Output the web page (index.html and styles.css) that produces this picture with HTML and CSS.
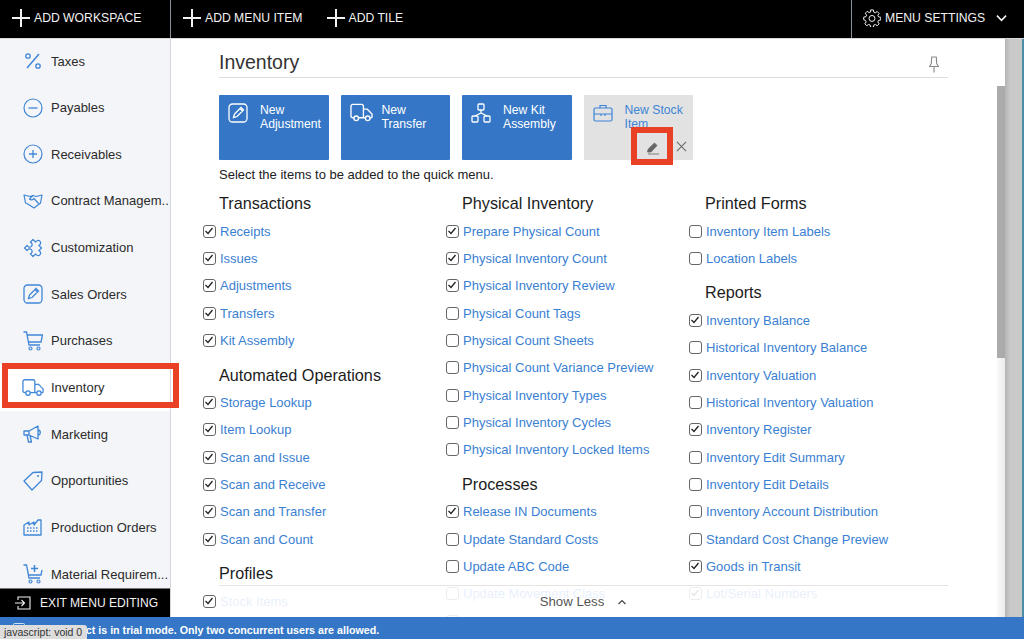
FILE: index.html
```html
<!DOCTYPE html>
<html lang="en">
<head>
<meta charset="utf-8">
<title>Inventory</title>
<link rel="stylesheet" href="styles.css">
</head>
<body>
<svg class="defs" width="0" height="0" aria-hidden="true">
  <symbol id="plus" viewBox="0 0 18 18"><path d="M9 0v18M0 9h18" fill="none" stroke="currentColor" stroke-width="2"/></symbol>
  <symbol id="truck" viewBox="0 0 24 20"><path d="M4 15H3a2 2 0 0 1-2-2V3a2 2 0 0 1 2-2h9a2 2 0 0 1 2 2v12H9M14 6h4l5 5v3a1 1 0 0 1-1 1h-1M16 15h-2" fill="none" stroke="currentColor" stroke-width="1.4"/><circle cx="6.5" cy="15.5" r="2.4" fill="none" stroke="currentColor" stroke-width="1.4"/><circle cx="18.5" cy="15.5" r="2.4" fill="none" stroke="currentColor" stroke-width="1.4"/></symbol>
  <symbol id="edit" viewBox="0 0 20 20"><rect x="1" y="1" width="18" height="18" rx="3.5" fill="none" stroke="currentColor" stroke-width="1.3"/><path d="M5.5 14.5l1-3.5 6.5-6.5 2.5 2.5-6.5 6.5zM12 5.500l2.500 2.500" fill="none" stroke="currentColor" stroke-width="1.3"/></symbol>
</svg>

<header class="topbar">
  <div class="top-cell top-left"><svg class="plus"><use href="#plus"/></svg>ADD WORKSPACE</div>
  <div class="top-main">
    <div class="top-item"><svg class="plus"><use href="#plus"/></svg>ADD MENU ITEM</div>
    <div class="top-item"><svg class="plus"><use href="#plus"/></svg>ADD TILE</div>
  </div>
  <div class="top-settings">
    <svg class="gear" viewBox="0 0 20 20"><path d="M8.500 1h3l.5 2.500 1.700.7 2.100-1.400 2.100 2.100-1.400 2.100.7 1.700 2.500.5v3l-2.500.5-.7 1.700 1.400 2.100-2.100 2.100-2.100-1.400-1.700.7-.5 2.500h-3l-.5-2.500-1.700-.7-2.100 1.400-2.100-2.100 1.400-2.100-.7-1.700L.800 12v-3l2.500-.5.7-1.700-1.400-2.100 2.100-2.100 2.100 1.400 1.700-.7z" fill="none" stroke="currentColor" stroke-width="1.100" stroke-linejoin="round"/><circle cx="10" cy="10.500" r="3.300" fill="none" stroke="currentColor" stroke-width="1.100"/></svg>
    MENU SETTINGS
    <svg class="chev" viewBox="0 0 12 8"><path d="M1 1.500l5 5 5-5" fill="none" stroke="currentColor" stroke-width="1.800"/></svg>
  </div>
</header>

<div class="body-row">
  <nav class="sidebar">
    <div class="nav-list">
      <a class="nav-item"><span class="nav-icon"><svg viewBox="0 0 20 20"><path d="M16 3L4 17" fill="none" stroke="currentColor" stroke-width="1.500"/><circle cx="5" cy="5" r="2.200" fill="none" stroke="currentColor" stroke-width="1.300"/><circle cx="15" cy="15" r="2.200" fill="none" stroke="currentColor" stroke-width="1.300"/></svg></span><span class="nav-text">Taxes</span></a>
      <a class="nav-item"><span class="nav-icon"><svg viewBox="0 0 20 20"><circle cx="10" cy="10" r="9" fill="none" stroke="currentColor" stroke-width="1.200"/><path d="M5.500 10h9" stroke="currentColor" stroke-width="1.300"/></svg></span><span class="nav-text">Payables</span></a>
      <a class="nav-item"><span class="nav-icon"><svg viewBox="0 0 20 20"><circle cx="10" cy="10" r="9" fill="none" stroke="currentColor" stroke-width="1.200"/><path d="M6 10h8M10 6v8" stroke="currentColor" stroke-width="1.300"/></svg></span><span class="nav-text">Receivables</span></a>
      <a class="nav-item"><span class="nav-icon"><svg viewBox="0 0 20 16"><path d="M1 2l6 1.500 3-1 3 1 6-1.500-1.500 8-6.500 5L4 10.500 2.500 10zM10 2.500L6.500 6c1.500 1.500 3 1 4.500-.5l4.500 5" fill="none" stroke="currentColor" stroke-width="1.200" stroke-linejoin="round"/></svg></span><span class="nav-text">Contract Managem..</span></a>
      <a class="nav-item"><span class="nav-icon"><svg viewBox="2.500 3.500 15 15"><path d="M5.500 6.500h2.800a1.900 1.900 0 1 1 3.400 0h2.800v2.800a1.900 1.900 0 1 1 0 3.400v2.800h-2.800a1.900 1.900 0 1 0-3.400 0H5.500v-2.800a1.900 1.900 0 1 0 0-3.400z" transform="rotate(45 10 11)" fill="none" stroke="currentColor" stroke-width=".95" stroke-linejoin="round"/></svg></span><span class="nav-text">Customization</span></a>
      <a class="nav-item"><span class="nav-icon"><svg><use href="#edit"/></svg></span><span class="nav-text">Sales Orders</span></a>
      <a class="nav-item"><span class="nav-icon"><svg viewBox="0 0 20 20"><path d="M0.500 1h3l2.500 13h11M4.500 4h15l-1.500 7H6" fill="none" stroke="currentColor" stroke-width="1.300"/><circle cx="7.500" cy="17.500" r="1.500" fill="none" stroke="currentColor" stroke-width="1.200"/><circle cx="15.500" cy="17.500" r="1.500" fill="none" stroke="currentColor" stroke-width="1.200"/></svg></span><span class="nav-text">Purchases</span></a>
      <a class="nav-item nav-active"><span class="nav-icon nav-icon-wide"><svg><use href="#truck"/></svg></span><span class="nav-text">Inventory</span></a>
      <a class="nav-item"><span class="nav-icon"><svg viewBox="0 0 20 20"><path d="M1 7h5l9-5v13l-9-4H1zM6 7v4M4 11l1.500 7h3L7 11.500M15 6c3 0 3 5 0 5" fill="none" stroke="currentColor" stroke-width="1.300" stroke-linejoin="round"/></svg></span><span class="nav-text">Marketing</span></a>
      <a class="nav-item"><span class="nav-icon"><svg viewBox="0 0 20 20"><path d="M1 10L10 1.500l9-.5-.5 8.500L9 19z" fill="none" stroke="currentColor" stroke-width="1.300" stroke-linejoin="round"/><circle cx="15" cy="5" r="1" fill="currentColor"/></svg></span><span class="nav-text">Opportunities</span></a>
      <a class="nav-item"><span class="nav-icon"><svg viewBox="0 0 20 18"><path d="M1 17V7l5-3v3l5-3v3l4-5h3v15z" fill="none" stroke="currentColor" stroke-width="1.300" stroke-linejoin="round"/><path d="M4 10h12M4 13h12" stroke="currentColor" stroke-width="1.500" stroke-dasharray="1.500 1.500"/></svg></span><span class="nav-text">Production Orders</span></a>
      <a class="nav-item"><span class="nav-icon"><svg viewBox="0 0 20 20"><path d="M0.500 1h3l2.500 13h11M4.500 6l1 5H18l1-5" fill="none" stroke="currentColor" stroke-width="1.300"/><path d="M11.500 1v7M8 4.500h7" stroke="currentColor" stroke-width="1.500"/><circle cx="7.500" cy="17.500" r="1.500" fill="none" stroke="currentColor" stroke-width="1.200"/><circle cx="15.500" cy="17.500" r="1.500" fill="none" stroke="currentColor" stroke-width="1.200"/></svg></span><span class="nav-text">Material Requirem...</span></a>
    </div>
    <div class="exit">
      <svg class="exit-icon" viewBox="0 0 16 14"><path d="M3 4V1h12v12H3v-3M0 7h9M6.500 4L9.500 7l-3 3" fill="none" stroke="currentColor" stroke-width="1.100"/></svg>
      EXIT MENU EDITING
    </div>
  </nav>

  <main class="content">
    <div class="panel">
      <div class="title-row">
        <h1>Inventory</h1>
        <svg class="pin" viewBox="0 0 10 17"><path d="M2.700 1h4.600l.4 6.500L9.500 10.500H.5l1.800-3zM5 10.500V16.500" fill="none" stroke="#888" stroke-width="1.100" stroke-linejoin="round"/></svg>
      </div>

      <div class="tiles">
        <div class="tile"><svg class="tile-icon"><use href="#edit"/></svg><span class="tile-label">New Adjustment</span></div>
        <div class="tile"><svg class="tile-icon tile-truck"><use href="#truck"/></svg><span class="tile-label">New Transfer</span></div>
        <div class="tile"><svg class="tile-icon" viewBox="0 0 20 20"><g fill="none" stroke="currentColor" stroke-width="1.300"><rect x="7" y="1" width="6" height="6" rx="1"/><rect x="1" y="13" width="6" height="6" rx="1"/><rect x="13" y="13" width="6" height="6" rx="1"/><path d="M10 7v3M4 13l6-3 6 3"/></g></svg><span class="tile-label">New Kit Assembly</span></div>
        <div class="tile tile-edit">
          <svg class="tile-icon" viewBox="0 0 20 18"><g fill="none" stroke="currentColor" stroke-width="1.200"><rect x="1" y="4" width="18" height="13" rx="1.500"/><path d="M7 4V1.500h6V4M1 10h18M8 10v2M12 10v2"/></g></svg>
          <span class="tile-label">New Stock Item</span>
          <span class="tile-pen"><svg viewBox="0 0 14 14"><path d="M1.500 11l.8-3L8.500 2l2.500 2.500L5 11zM2 13h11" fill="#666" stroke="#666" stroke-width=".8"/></svg></span>
          <svg class="tile-x" viewBox="0 0 12 12"><path d="M1 1l10 10M11 1L1 11" fill="none" stroke="#666" stroke-width="1.100"/></svg>
        </div>
      </div>

      <p class="hint">Select the items to be added to the quick menu.</p>

      <div class="columns">
        <div class="col">
          <h2>Transactions</h2>
          <ul>
            <li class="on"><i></i><a>Receipts</a></li>
            <li class="on"><i></i><a>Issues</a></li>
            <li class="on"><i></i><a>Adjustments</a></li>
            <li class="on"><i></i><a>Transfers</a></li>
            <li class="on"><i></i><a>Kit Assembly</a></li>
          </ul>
          <h2>Automated Operations</h2>
          <ul>
            <li class="on"><i></i><a>Storage Lookup</a></li>
            <li class="on"><i></i><a>Item Lookup</a></li>
            <li class="on"><i></i><a>Scan and Issue</a></li>
            <li class="on"><i></i><a>Scan and Receive</a></li>
            <li class="on"><i></i><a>Scan and Transfer</a></li>
            <li class="on"><i></i><a>Scan and Count</a></li>
          </ul>
          <h2>Profiles</h2>
          <ul>
            <li class="on"><i></i><a>Stock Items</a></li>
          </ul>
        </div>
        <div class="col">
          <h2>Physical Inventory</h2>
          <ul>
            <li class="on"><i></i><a>Prepare Physical Count</a></li>
            <li class="on"><i></i><a>Physical Inventory Count</a></li>
            <li class="on"><i></i><a>Physical Inventory Review</a></li>
            <li><i></i><a>Physical Count Tags</a></li>
            <li><i></i><a>Physical Count Sheets</a></li>
            <li><i></i><a>Physical Count Variance Preview</a></li>
            <li><i></i><a>Physical Inventory Types</a></li>
            <li><i></i><a>Physical Inventory Cycles</a></li>
            <li><i></i><a>Physical Inventory Locked Items</a></li>
          </ul>
          <h2>Processes</h2>
          <ul>
            <li class="on"><i></i><a>Release IN Documents</a></li>
            <li><i></i><a>Update Standard Costs</a></li>
            <li><i></i><a>Update ABC Code</a></li>
            <li><i></i><a>Update Movement Class</a></li>
            <li><i></i><a>Update Price</a></li>
          </ul>
        </div>
        <div class="col">
          <h2>Printed Forms</h2>
          <ul>
            <li><i></i><a>Inventory Item Labels</a></li>
            <li><i></i><a>Location Labels</a></li>
          </ul>
          <h2>Reports</h2>
          <ul>
            <li class="on"><i></i><a>Inventory Balance</a></li>
            <li><i></i><a>Historical Inventory Balance</a></li>
            <li class="on"><i></i><a>Inventory Valuation</a></li>
            <li><i></i><a>Historical Inventory Valuation</a></li>
            <li class="on"><i></i><a>Inventory Register</a></li>
            <li><i></i><a>Inventory Edit Summary</a></li>
            <li><i></i><a>Inventory Edit Details</a></li>
            <li><i></i><a>Inventory Account Distribution</a></li>
            <li><i></i><a>Standard Cost Change Preview</a></li>
            <li class="on"><i></i><a>Goods in Transit</a></li>
            <li class="on"><i></i><a>Lot/Serial Numbers</a></li>
          </ul>
        </div>
      </div>

      <div class="show-less">Show Less <svg viewBox="0 0 10 6"><path d="M1.500 5L5 1.500 8.500 5" fill="none" stroke="#444" stroke-width="1.200"/></svg></div>
    </div>
    <div class="scroll-inner"><div class="scroll-thumb"></div></div>
    <div class="scroll-outer"></div>
  </main>
</div>

<footer class="trial">
  <svg class="trial-icon" viewBox="0 0 12 16"><rect x=".5" y=".5" width="11" height="15" rx="1" fill="none" stroke="#cfe0f4" stroke-width="1"/></svg>
  <span>Your product is in trial mode. Only two concurrent users are allowed.</span>
</footer>
<div class="red-box red-nav"></div>
<div class="red-box red-pen"></div>
<div class="status">javascript: void 0</div>
</body>
</html>
```

FILE: styles.css
```css
* { box-sizing: border-box; }
html, body { margin: 0; height: 100%; }
body {
  width: 1024px; height: 639px; overflow: hidden; position: relative;
  display: flex; flex-direction: column;
  font-family: "Liberation Sans", Arial, sans-serif; color: #222; background: #fff;
}
.defs { position: absolute; }

.topbar { height: 39px; flex: none; display: flex; background: #000; color: #f2f2f2; font-size: 12.2px; border-bottom: 1px solid #d9d9d9; }
.top-cell, .top-item, .top-settings { display: flex; align-items: center; padding-bottom: 2px; }
.top-left { width: 171px; padding-left: 12px; gap: 4px; border-right: 1px solid #8a939c; }
.top-main { flex: 1; display: flex; padding-left: 12px; gap: 24px; }
.top-item { gap: 4px; }
.plus { width: 18px; height: 18px; flex: none; }
.top-settings { width: 173px; padding-left: 11px; border-left: 1px solid #8a939c; }
.gear { width: 18px; height: 18px; margin-right: 4px; }
.chev { width: 11px; height: 8px; margin-left: 11px; }

.body-row { flex: 1; min-height: 0; display: flex; }
.sidebar { width: 171px; flex: none; display: flex; flex-direction: column; background: #f4f5f8; border-right: 1px solid #d4d6da; }
.nav-list { flex: 1; min-height: 0; margin-top: -1.3px; overflow: hidden; display: flex; flex-direction: column; }
.nav-item { height: 46.65px; flex: none; display: flex; align-items: center; padding-left: 23px; font-size: 13px; color: #2b2b2b; }
.nav-text { flex: 1; min-width: 0; white-space: nowrap; overflow: hidden; }
.nav-icon { width: 20px; height: 20px; margin-right: 8px; flex: none; color: #3f86d6; display: block; }
.nav-icon svg { width: 100%; height: 100%; display: block; }
.nav-icon-wide { width: 22px; margin-left: -1px; margin-right: 7px; }
.nav-active { background: #fff; }
.exit { height: 29px; flex: none; width: 170px; background: #000; color: #f2f2f2; display: flex; align-items: center; padding-left: 15px; gap: 9px; font-size: 12.1px; border-top: 1px solid #777; }
.exit-icon { width: 16px; height: 14px; flex: none; }

.content { flex: 1; min-width: 0; display: flex; position: relative; overflow: hidden; }
.panel { flex: 1; min-width: 0; padding: 0 0 0 32px; position: relative; overflow: hidden; }
.title-row { width: 729px; margin-left: 16px; height: 39px; display: flex; align-items: center; justify-content: space-between; padding-top: 8px; padding-right: 9px; border-bottom: 1px solid #dcdcdc; }
h1 { margin: 0; font-size: 19.5px; font-weight: 400; color: #333; }
.pin { width: 10px; height: 17px; align-self: flex-end; margin-bottom: 4px; }

.tiles { display: flex; gap: 12px; margin: 17px 0 0 16px; }
.tile { position: relative; width: 109.5px; height: 65px; background: #3577c6; color: #fff; font-size: 12.2px; line-height: 14px; border-radius: 1px; display: flex; padding: 8px 8px 0 9px; gap: 12px; }
.tile-icon { width: 20px; height: 20px; flex: none; }
.tile-truck { width: 23px; margin-right: -3px; }
.tile-label { line-height: 14px; }
.tile-edit { background: #e2e2e2; color: #3d84d6; }
.tile-pen { position: absolute; left: 51px; top: 40px; width: 36px; height: 25px; display: flex; align-items: center; justify-content: center; background: #e2e2e2; }
.tile-pen svg { width: 14px; height: 14px; }
.tile-x { position: absolute; left: 92px; top: 46px; width: 11px; height: 11px; }

.hint { margin: 7px 0 0 16px; font-size: 13px; line-height: 16px; color: #222; }

.columns { display: grid; grid-template-columns: 243px 243px 243px; margin-top: 10px; }
h2 { margin: 0 0 0 16px; font-size: 16.2px; line-height: 20px; font-weight: 400; color: #1c1c1c; }
.col > h2:first-child { margin-bottom: .5px; }
ul { list-style: none; margin: 4.4px 0 10.4px; padding: 0; }
li { height: 27.35px; display: flex; align-items: center; gap: 4px; font-size: 13px; color: #3a80d2; }
li i { width: 13px; height: 13px; border: 1.5px solid #666; border-radius: 3px; flex: none; background: #fff; }
li.on i { background: #fff url("data:image/svg+xml,%3Csvg xmlns='http://www.w3.org/2000/svg' viewBox='0 0 13 13'%3E%3Cpath d='M2.500 6l2.500 2.500 4.500-5.500' fill='none' stroke='%23222' stroke-width='1.300'/%3E%3C/svg%3E") center/13px no-repeat; }

.show-less { position: absolute; left: 48px; bottom: 0; width: 729px; height: 32px; background: rgba(255,255,255,.88); border-top: 1px solid #e4e4e4; font-size: 13.2px; color: #555; display: flex; align-items: center; justify-content: center; gap: 13px; }
.show-less svg { width: 10px; height: 6px; }

.scroll-inner { width: 8px; position: absolute; right: 19px; top: 0; bottom: 0; background: linear-gradient(180deg, #fff 319px, transparent 319px), linear-gradient(90deg, #fafafa, #ebebeb); }
.scroll-thumb { margin-top: 47px; height: 272px; background: #ababab; }
.scroll-outer { width: 19px; flex: none; background: linear-gradient(90deg, #b4b4b4 0, #c9c9c9 5px, #c9c9c9 17px, #4c8ca6 17px); }

.trial { height: 22px; flex: none; background: #3577c6; color: #fff; font-size: 10.7px; font-weight: 700; line-height: 14px; padding: 6px 0 0 13px; white-space: nowrap; display: flex; gap: 4px; overflow: hidden; }
.trial-icon { width: 12px; height: 16px; flex: none; }

.red-box { position: absolute; border: 6px solid #ea4126; }
.red-nav { left: 2px; top: 363px; width: 177px; height: 45px; }
.red-pen { left: 631px; top: 127px; width: 42px; height: 38px; }
.status { position: absolute; left: 0; bottom: 0; height: 14px; padding: 0 4px; background: #ddd; border-top-right-radius: 3px; color: #333; font-size: 10.5px; line-height: 14px; width: 87px; white-space: nowrap; }
```
